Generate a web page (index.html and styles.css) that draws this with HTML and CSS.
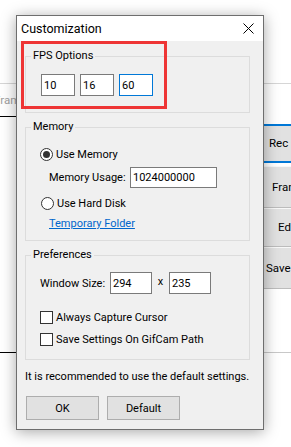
FILE: index.html
```html
<!DOCTYPE html>
<html lang="en">
<head>
    <meta charset="UTF-8">
    <title>Customization</title>
    <link rel="stylesheet" href="styles.css">
</head>
<body>
    <div class="backwin">
        <div class="back-main">
            <div class="back-label">Frame</div>
            <div class="back-canvas"></div>
        </div>
        <div class="back-side">
            <div class="side-btn side-rec">Rec</div>
            <div class="side-btn side-frame">Frame</div>
            <div class="side-btn side-edit">Edit</div>
            <div class="side-btn side-save">Save</div>
        </div>
    </div>

    <div class="dialog">
        <div class="titlebar">
            <span class="title">Customization</span>
            <svg class="close-icon" width="11" height="11" viewBox="0 0 11 11">
                <path d="M0.5 0.5 L10.5 10.5 M10.5 0.5 L0.5 10.5" stroke="#000" stroke-width="1" fill="none"/>
            </svg>
        </div>

        <div class="dialog-body">
            <fieldset class="group group-fps">
                <legend>FPS Options</legend>
                <div class="fps-row">
                    <input class="field fps-field" type="text" value="10">
                    <input class="field fps-field" type="text" value="16">
                    <input class="field fps-field field-focus" type="text" value="60">
                </div>
            </fieldset>

            <fieldset class="group group-memory">
                <legend>Memory</legend>
                <div class="opt-row">
                    <span class="radio radio-on"></span>
                    <span>Use Memory</span>
                </div>
                <div class="usage-row">
                    <span class="usage-label">Memory Usage:</span>
                    <input class="field usage-field" type="text" value="1024000000">
                </div>
                <div class="opt-row disk-row">
                    <span class="radio"></span>
                    <span>Use Hard Disk</span>
                </div>
                <div class="link-row">
                    <a href="#" class="link">Temporary Folder</a>
                </div>
            </fieldset>

            <fieldset class="group group-prefs">
                <legend>Preferences</legend>
                <div class="size-row">
                    <span class="size-label">Window Size:</span>
                    <input class="field size-field" type="text" value="294">
                    <span class="size-x">x</span>
                    <input class="field size-field" type="text" value="235">
                </div>
                <div class="opt-row check-row">
                    <span class="checkbox"></span>
                    <span>Always Capture Cursor</span>
                </div>
                <div class="opt-row check-row2">
                    <span class="checkbox"></span>
                    <span>Save Settings On GifCam Path</span>
                </div>
            </fieldset>

            <p class="note">It is recommended to use the default settings.</p>

            <div class="buttons">
                <button class="btn">OK</button>
                <button class="btn">Default</button>
            </div>
        </div>

        <div class="highlight"></div>
    </div>
</body>
</html>
```

FILE: styles.css
```css
body {
    margin: 0;
    width: 291px;
    height: 447px;
    overflow: hidden;
    background-color: white;
    font-family: Roboto, "Noto Sans", sans-serif;
    font-size: 11px;
    color: black;
}

/* window behind the dialog */
.backwin {
    margin-top: 83px;
    display: flex;
    border-top: 1px solid #d6d6d6;
}

.back-main {
    width: 263px;
    flex-shrink: 0;
}

.back-label {
    height: 32px;
    line-height: 32px;
    margin-left: -6px;
    color: #a0a0a0;
    font-size: 11.5px;
    white-space: nowrap;
}

.back-canvas {
    height: 235px;
    border-top: 1px solid #000;
    border-bottom: 1px solid #000;
}

.back-side {
    width: 60px;
    flex-shrink: 0;
    padding-top: 40px;
    height: 228px;
    border-bottom: 1px solid #c8c8c8;
    white-space: nowrap;
    font-size: 11.5px;
}

.side-btn {
    background-color: #e1e1e1;
    border-top: 1px solid #f8f8f8;
    border-bottom: 1px solid #bcbcbc;
    height: 40px;
    line-height: 40px;
}

.side-rec {
    border-top: 2px solid #0078d7;
    border-bottom: 2px solid #0078d7;
    height: 35px;
    line-height: 35px;
    padding-left: 6px;
    margin-bottom: 3px;
}

.side-frame {
    padding-left: 9px;
}

.side-edit {
    padding-left: 15px;
    height: 37px;
    line-height: 37px;
}

.side-save {
    padding-left: 3px;
}

/* dialog */
.dialog {
    position: absolute;
    left: 16px;
    top: 15px;
    width: 246px;
    height: 413px;
    border: 1px solid #6e6e6e;
    background-color: #f0f0f0;
    box-shadow: 0 2px 14px rgba(0, 0, 0, 0.35);
    white-space: nowrap;
}

.titlebar {
    height: 25px;
    background-color: white;
    display: flex;
    align-items: center;
    justify-content: space-between;
    padding-left: 4px;
    padding-right: 9px;
}

.title {
    font-size: 12.5px;
}

.close-icon {
    display: block;
}

.highlight {
    position: absolute;
    left: 4px;
    top: 25px;
    width: 140px;
    height: 62px;
    border: 3px solid #ee3535;
}

.group {
    margin: 0 13px 0 8px;
    padding: 0 0 0 14px;
    border: 1px solid #dcdcdc;
    min-width: 0;
}

.group legend {
    margin-left: -9px;
    padding: 0 2px;
    line-height: 16px;
}

.group-fps {
    margin-top: 7px;
    padding-top: 10px;
    padding-bottom: 16px;
    padding-left: 15px;
}

.group-fps legend {
    margin-left: -10px;
}

.fps-row {
    display: flex;
    gap: 5px;
}

.field {
    box-sizing: border-box;
    height: 22px;
    border: 1px solid #7a7a7a;
    background-color: white;
    font-family: inherit;
    font-size: 11px;
    padding: 0 2px;
    margin: 0;
    color: black;
    outline: none;
    flex-shrink: 0;
}

.fps-field {
    width: 34px;
}

.field-focus {
    border-color: #0078d7;
}

.group-memory {
    margin-top: 6px;
    padding-top: 9px;
    padding-bottom: 6px;
}

.opt-row {
    display: flex;
    align-items: center;
    gap: 3px;
    height: 20px;
}

.radio {
    box-sizing: border-box;
    width: 13px;
    height: 13px;
    border: 1px solid #333;
    border-radius: 50%;
    background-color: white;
    display: flex;
    align-items: center;
    justify-content: center;
    flex-shrink: 0;
}

.radio-on::after {
    content: "";
    width: 7px;
    height: 7px;
    border-radius: 50%;
    background-color: #333;
}

.usage-row {
    display: flex;
    align-items: center;
    margin-top: 3px;
    padding-left: 9px;
}

.usage-label {
    width: 81px;
    flex-shrink: 0;
}

.usage-field {
    width: 87px;
    height: 21px;
}

.disk-row {
    margin-top: 5px;
    padding-left: 1px;
}

.link-row {
    margin-top: 1px;
    height: 20px;
    line-height: 20px;
    padding-left: 9px;
}

.link {
    color: #0066cc;
}

.group-prefs {
    margin-top: 6px;
    padding-top: 9px;
    padding-bottom: 10px;
}

.size-row {
    display: flex;
    align-items: center;
}

.size-label {
    width: 70px;
    flex-shrink: 0;
}

.size-field {
    width: 42px;
}

.size-x {
    width: 17px;
    text-align: center;
    margin-top: -3px;
}

.check-row {
    margin-top: 13px;
}

.check-row2 {
    margin-top: 2px;
}

.checkbox {
    box-sizing: border-box;
    width: 13px;
    height: 13px;
    border: 1px solid #333;
    background-color: white;
    flex-shrink: 0;
}

.note {
    margin: 9px 0 0 8px;
    line-height: 16px;
}

.buttons {
    display: flex;
    gap: 8px;
    margin: 11px 0 0 9px;
}

.btn {
    box-sizing: border-box;
    width: 73px;
    height: 24px;
    background-color: #e1e1e1;
    border: 1px solid #adadad;
    font-family: inherit;
    font-size: 11px;
    color: black;
    padding: 0;
}
```
